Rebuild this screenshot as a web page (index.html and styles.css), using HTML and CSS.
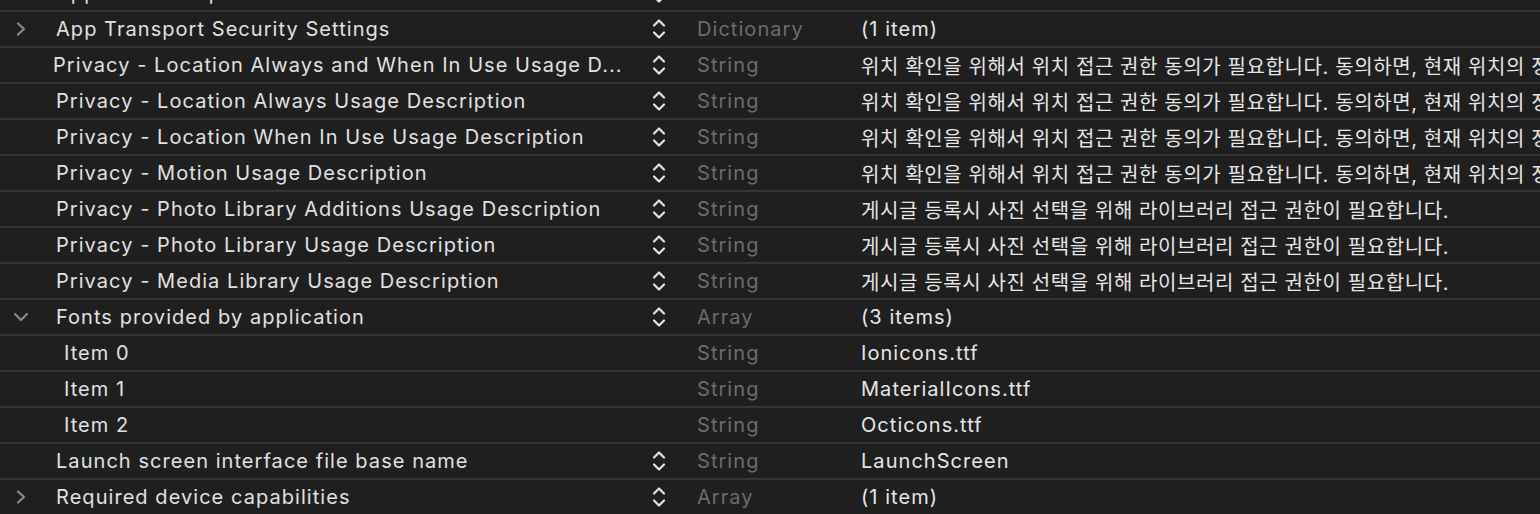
FILE: index.html
```html
<!DOCTYPE html>
<html lang="ko">
<head>
<meta charset="utf-8">
<title>Info.plist</title>
<link rel="stylesheet" href="styles.css">
</head>
<body>
<div class="plist">
  <div class="row">
    <span class="disc"></span>
    <span class="key">Application requires iPhone environment</span>
    <span class="step"><svg viewBox="0 0 14 22" width="14" height="22"><path d="M2 7.5 L7 2.5 L12 7.5 M2 14.5 L7 19.5 L12 14.5"/></svg></span>
    <span class="type">Boolean</span>
    <span class="value">YES</span>
  </div>
  <div class="row">
    <span class="disc"><svg class="chev" viewBox="0 0 12 14" width="12" height="14"><path d="M3 1.5 L9 7 L3 12.5"/></svg></span>
    <span class="key">App Transport Security Settings</span>
    <span class="step"><svg viewBox="0 0 14 22" width="14" height="22"><path d="M2 7.5 L7 2.5 L12 7.5 M2 14.5 L7 19.5 L12 14.5"/></svg></span>
    <span class="type">Dictionary</span>
    <span class="value">(1 item)</span>
  </div>
  <div class="row">
    <span class="disc"></span>
    <span class="key shift">Privacy - Location Always and When In Use Usage D...</span>
    <span class="step"><svg viewBox="0 0 14 22" width="14" height="22"><path d="M2 7.5 L7 2.5 L12 7.5 M2 14.5 L7 19.5 L12 14.5"/></svg></span>
    <span class="type">String</span>
    <span class="value ko">위치 확인을 위해서 위치 접근 권한 동의가 필요합니다. 동의하면, 현재 위치의 정보를 확인할 수 있습니다.</span>
  </div>
  <div class="row">
    <span class="disc"></span>
    <span class="key">Privacy - Location Always Usage Description</span>
    <span class="step"><svg viewBox="0 0 14 22" width="14" height="22"><path d="M2 7.5 L7 2.5 L12 7.5 M2 14.5 L7 19.5 L12 14.5"/></svg></span>
    <span class="type">String</span>
    <span class="value ko">위치 확인을 위해서 위치 접근 권한 동의가 필요합니다. 동의하면, 현재 위치의 정보를 확인할 수 있습니다.</span>
  </div>
  <div class="row">
    <span class="disc"></span>
    <span class="key">Privacy - Location When In Use Usage Description</span>
    <span class="step"><svg viewBox="0 0 14 22" width="14" height="22"><path d="M2 7.5 L7 2.5 L12 7.5 M2 14.5 L7 19.5 L12 14.5"/></svg></span>
    <span class="type">String</span>
    <span class="value ko">위치 확인을 위해서 위치 접근 권한 동의가 필요합니다. 동의하면, 현재 위치의 정보를 확인할 수 있습니다.</span>
  </div>
  <div class="row">
    <span class="disc"></span>
    <span class="key">Privacy - Motion Usage Description</span>
    <span class="step"><svg viewBox="0 0 14 22" width="14" height="22"><path d="M2 7.5 L7 2.5 L12 7.5 M2 14.5 L7 19.5 L12 14.5"/></svg></span>
    <span class="type">String</span>
    <span class="value ko">위치 확인을 위해서 위치 접근 권한 동의가 필요합니다. 동의하면, 현재 위치의 정보를 확인할 수 있습니다.</span>
  </div>
  <div class="row">
    <span class="disc"></span>
    <span class="key">Privacy - Photo Library Additions Usage Description</span>
    <span class="step"><svg viewBox="0 0 14 22" width="14" height="22"><path d="M2 7.5 L7 2.5 L12 7.5 M2 14.5 L7 19.5 L12 14.5"/></svg></span>
    <span class="type">String</span>
    <span class="value ko">게시글 등록시 사진 선택을 위해 라이브러리 접근 권한이 필요합니다.</span>
  </div>
  <div class="row">
    <span class="disc"></span>
    <span class="key">Privacy - Photo Library Usage Description</span>
    <span class="step"><svg viewBox="0 0 14 22" width="14" height="22"><path d="M2 7.5 L7 2.5 L12 7.5 M2 14.5 L7 19.5 L12 14.5"/></svg></span>
    <span class="type">String</span>
    <span class="value ko">게시글 등록시 사진 선택을 위해 라이브러리 접근 권한이 필요합니다.</span>
  </div>
  <div class="row">
    <span class="disc"></span>
    <span class="key">Privacy - Media Library Usage Description</span>
    <span class="step"><svg viewBox="0 0 14 22" width="14" height="22"><path d="M2 7.5 L7 2.5 L12 7.5 M2 14.5 L7 19.5 L12 14.5"/></svg></span>
    <span class="type">String</span>
    <span class="value ko">게시글 등록시 사진 선택을 위해 라이브러리 접근 권한이 필요합니다.</span>
  </div>
  <div class="row">
    <span class="disc"><svg class="chev down" viewBox="0 0 16 10" width="16" height="10"><path d="M2 2 L8 8 L14 2"/></svg></span>
    <span class="key">Fonts provided by application</span>
    <span class="step"><svg viewBox="0 0 14 22" width="14" height="22"><path d="M2 7.5 L7 2.5 L12 7.5 M2 14.5 L7 19.5 L12 14.5"/></svg></span>
    <span class="type">Array</span>
    <span class="value">(3 items)</span>
  </div>
  <div class="row">
    <span class="disc"></span>
    <span class="key child">Item 0</span>
    <span class="step"></span>
    <span class="type">String</span>
    <span class="value">Ionicons.ttf</span>
  </div>
  <div class="row">
    <span class="disc"></span>
    <span class="key child">Item 1</span>
    <span class="step"></span>
    <span class="type">String</span>
    <span class="value">MaterialIcons.ttf</span>
  </div>
  <div class="row">
    <span class="disc"></span>
    <span class="key child">Item 2</span>
    <span class="step"></span>
    <span class="type">String</span>
    <span class="value">Octicons.ttf</span>
  </div>
  <div class="row">
    <span class="disc"></span>
    <span class="key">Launch screen interface file base name</span>
    <span class="step"><svg viewBox="0 0 14 22" width="14" height="22"><path d="M2 7.5 L7 2.5 L12 7.5 M2 14.5 L7 19.5 L12 14.5"/></svg></span>
    <span class="type">String</span>
    <span class="value">LaunchScreen</span>
  </div>
  <div class="row">
    <span class="disc"><svg class="chev" viewBox="0 0 12 14" width="12" height="14"><path d="M3 1.5 L9 7 L3 12.5"/></svg></span>
    <span class="key">Required device capabilities</span>
    <span class="step"><svg viewBox="0 0 14 22" width="14" height="22"><path d="M2 7.5 L7 2.5 L12 7.5 M2 14.5 L7 19.5 L12 14.5"/></svg></span>
    <span class="type">Array</span>
    <span class="value">(1 item)</span>
  </div>
</div>
</body>
</html>
```
FILE: styles.css
```css
html, body {
  margin: 0;
  padding: 0;
  background: #1f1f1f;
  overflow: hidden;
}

.plist {
  margin-top: -24px;
  font-family: "Inter", "Noto Sans CJK KR", sans-serif;
  font-size: 20px;
  letter-spacing: 1.05px;
  color: #e1e1e1;
}

.row {
  display: grid;
  grid-template-columns: 56px 584px 38px 183px 1fr;
  align-items: center;
  height: 34px;
  border-bottom: 2px solid #343434;
  white-space: nowrap;
}

.disc {
  display: flex;
  align-items: center;
  justify-content: center;
  padding-right: 14px;
}

.chev path {
  fill: none;
  stroke: #8a8a8a;
  stroke-width: 2.2;
  stroke-linecap: round;
  stroke-linejoin: round;
}

.key {
  overflow: hidden;
}

.key.shift {
  margin-left: -3px;
}

.key.child {
  padding-left: 8px;
}

.step {
  display: flex;
  align-items: center;
  justify-content: center;
}

.step path {
  fill: none;
  stroke: #e4e4e4;
  stroke-width: 2.2;
  stroke-linecap: round;
  stroke-linejoin: round;
}

.type {
  padding-left: 19px;
  color: #6c6c6c;
}

.value {
  overflow: hidden;
  color: #e6e6e6;
}

.value.ko {
  letter-spacing: 0.6px;
}
```
